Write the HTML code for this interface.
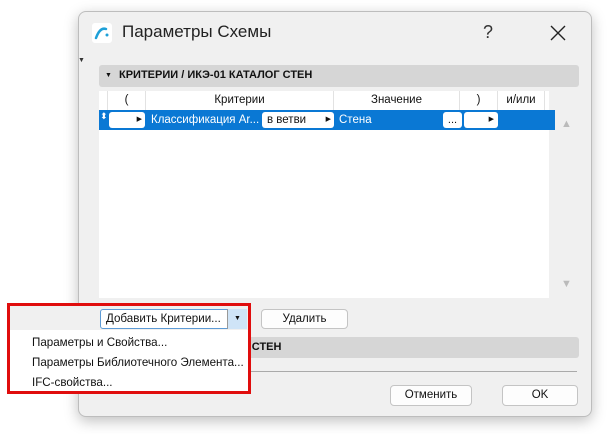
<!DOCTYPE html>
<html><head><meta charset="utf-8"><style>
*{box-sizing:border-box;margin:0;padding:0}
body{width:608px;height:434px;background:#fff;position:relative;overflow:hidden;font-family:"Liberation Sans","DejaVu Sans",sans-serif;font-size:11px;color:#111}
.abs{position:absolute}
.dlg{left:78px;top:11px;width:514px;height:406px;background:#f0f0f0;border:1px solid #bdbdbd;border-radius:8px;box-shadow:0 4px 14px rgba(0,0,0,.25)}
.hdr{background:#d6d6d6;border-radius:3px;font-weight:bold;font-size:11px;line-height:21px}
.btn{background:#fdfdfd;border:1px solid #c4c4c4;border-radius:4px;text-align:center;line-height:18px;font-size:11.5px}
.th{top:91px;height:19px;line-height:19px;text-align:center;border-right:1px solid #e2e2e2;background:#fff;font-size:11.5px}
.fld{background:#fff;border-radius:3px;height:16px;top:112px;color:#111;line-height:16px}
.mi{font-size:11.6px}
</style></head><body>
<div class="abs dlg"></div>
<div class="abs" style="left:92px;top:23px;width:20px;height:20px;background:#fff;border-radius:3px"></div>
<svg class="abs" style="left:92px;top:23px" width="20" height="20"><path d="M4 15 Q8 4 14 6" stroke="#1ea0d8" stroke-width="2.5" fill="none" stroke-linecap="round"/><circle cx="15" cy="12" r="1.5" fill="#1ea0d8"/></svg>
<div class="abs" style="left:122px;top:22px;font-size:17px;color:#222">Параметры Схемы</div>
<div class="abs" style="left:483px;top:22px;font-size:18px;color:#333">?</div>
<svg class="abs" style="left:549px;top:24px" width="18" height="18"><path d="M2 2L16 16M16 2L2 16" stroke="#222" stroke-width="1.4"/></svg>
<div class="abs" style="left:78px;top:57px;font-size:7px;color:#333">▼</div>
<div class="abs hdr" style="left:99px;top:65px;width:480px;height:22px;padding-left:20px"><span style="position:absolute;left:6px;font-size:7px">▼</span>КРИТЕРИИ / ИКЭ-01 КАТАЛОГ СТЕН</div>
<div class="abs" style="left:99px;top:91px;width:450px;height:207px;background:#fff"></div>
<div class="abs th" style="left:99px;width:9px"></div>
<div class="abs th" style="left:108px;width:38px">(</div>
<div class="abs th" style="left:146px;width:188px">Критерии</div>
<div class="abs th" style="left:334px;width:126px">Значение</div>
<div class="abs th" style="left:460px;width:38px">)</div>
<div class="abs th" style="left:498px;width:47px">и/или</div>
<div class="abs" style="left:99px;top:110px;width:456px;height:20px;background:#0a78d4"></div>
<div class="abs" style="left:100px;top:111px;color:#fff;font-size:9px">⬍</div>
<div class="abs fld" style="left:109px;width:36px;text-align:right;padding-right:3px;font-size:7px">▶</div>
<div class="abs" style="left:151px;top:114px;color:#fff;font-size:11.5px">Классификация Ar...</div>
<div class="abs fld" style="left:262px;width:72px;padding-left:5px;font-size:11.5px">в ветви<span style="position:absolute;right:3px;font-size:7px">▶</span></div>
<div class="abs" style="left:339px;top:114px;color:#fff;font-size:11.5px">Стена</div>
<div class="abs fld" style="left:443px;width:19px;text-align:center">...</div>
<div class="abs fld" style="left:464px;width:34px;text-align:right;padding-right:4px;font-size:7px">▶</div>
<div class="abs" style="left:561px;top:118px;color:#bbb;font-size:11px">▲</div>
<div class="abs" style="left:561px;top:278px;color:#bbb;font-size:11px">▼</div>
<div class="abs btn" style="left:261px;top:309px;width:87px;height:20px">Удалить</div>
<div class="abs hdr" style="left:99px;top:337px;width:480px;height:21px;padding-left:99px">КАТАЛОГ СТЕН</div>
<div class="abs" style="left:99px;top:371px;width:478px;height:1px;background:#aaa"></div>
<div class="abs btn" style="left:390px;top:385px;width:82px;height:21px">Отменить</div>
<div class="abs btn" style="left:502px;top:385px;width:76px;height:21px">OK</div>
<div class="abs" style="left:7px;top:303px;width:244px;height:91px;border:3px solid #e00d0d;background:#f0f0f0"></div>
<div class="abs" style="left:100px;top:309px;width:147px;height:20px;background:#fff;border:1px solid #5d9bd6;border-radius:3px"></div>
<div class="abs mi" style="left:106px;top:312px">Добавить Критерии...</div>
<div class="abs" style="left:227px;top:309px;width:20px;height:20px;background:#cfe4f7;border-left:1px solid #999;text-align:center;font-size:7px;line-height:20px">▼</div>
<div class="abs" style="left:10px;top:330px;width:238px;height:61px;background:#fff"></div>
<div class="abs mi" style="left:32px;top:336px">Параметры и Свойства...</div>
<div class="abs mi" style="left:32px;top:356px">Параметры Библиотечного Элемента...</div>
<div class="abs mi" style="left:32px;top:376px">IFC-свойства...</div>
</body></html>
